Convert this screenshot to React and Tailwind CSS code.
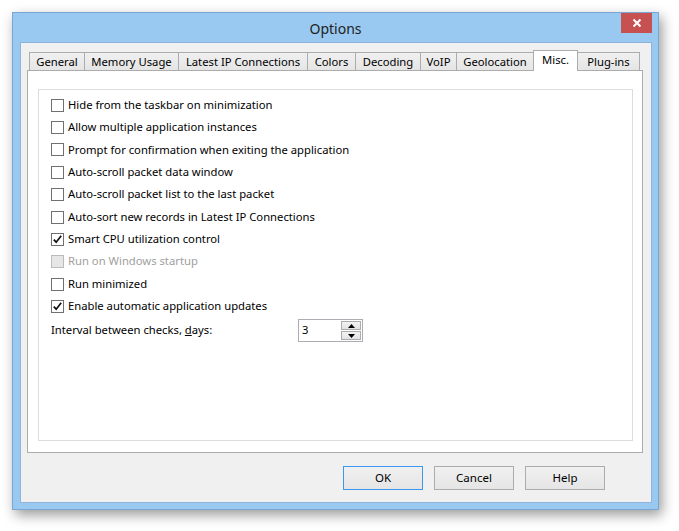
import React from 'react';

const tabs = [
  { label: 'General', w: 'w-[56px]' },
  { label: 'Memory Usage', w: 'w-[95px]' },
  { label: 'Latest IP Connections', w: 'w-[130px]' },
  { label: 'Colors', w: 'w-[49px]' },
  { label: 'Decoding', w: 'w-[66px]' },
  { label: 'VoIP', w: 'w-[37px]' },
  { label: 'Geolocation', w: 'w-[78px]' },
  { label: 'Misc.', w: 'w-[45px]', active: true },
  { label: 'Plug-ins', w: 'w-[63px]' },
];

const options = [
  { label: 'Hide from the taskbar on minimization' },
  { label: 'Allow multiple application instances' },
  { label: 'Prompt for confirmation when exiting the application' },
  { label: 'Auto-scroll packet data window' },
  { label: 'Auto-scroll packet list to the last packet' },
  { label: 'Auto-sort new records in Latest IP Connections' },
  { label: 'Smart CPU utilization control', checked: true },
  { label: 'Run on Windows startup', disabled: true },
  { label: 'Run minimized' },
  { label: 'Enable automatic application updates', checked: true },
];

const CheckBox = ({ checked, disabled }) => (
  <span
    className={
      'w-[13px] h-[13px] shrink-0 border flex items-center justify-center ' +
      (disabled ? 'border-[#bcbcbc] bg-[#e6e6e6]' : 'border-[#707070] bg-white')
    }
  >
    {checked && (
      <svg width="11" height="11" viewBox="0 0 11 11">
        <path d="M1.8 5.6 L4.2 8.2 L9.2 1.8" fill="none" stroke="#111" strokeWidth="1.7" />
      </svg>
    )}
  </span>
);

const Button = ({ children, primary }) => (
  <button
    className={
      'w-[80px] h-[24px] text-[11.5px] text-black bg-gradient-to-b from-[#f0f0f0] to-[#e5e5e5] border ' +
      (primary ? 'border-[#3c97ee]' : 'border-[#acacac]')
    }
  >
    {children}
  </button>
);

export default function App() {
  return (
    <div className="w-[679px] h-[531px] bg-white pt-[12px] pl-[12px] font-['Noto_Sans',sans-serif] text-black">
      {/* window */}
      <div className="w-[647px] h-[498px] bg-[#99c9f0] border border-[#7aa6d4] flex flex-col shadow-[3px_5px_12px_rgba(0,0,0,0.4)]">
        {/* title bar */}
        <div className="h-[29px] flex items-start relative">
          <div className="flex-1 text-center text-[14px] leading-[31px] text-[#222]">Options</div>
          <button className="absolute right-[6px] top-0 w-[31px] h-[20px] bg-[#c75050] flex items-center justify-center">
            <svg width="10" height="10" viewBox="0 0 10 10">
              <path d="M1.5 1.5 L8.5 8.5 M8.5 1.5 L1.5 8.5" stroke="#fff" strokeWidth="2" />
            </svg>
          </button>
        </div>

        {/* client area */}
        <div className="ml-[7px] mr-[6px] mb-[6px] flex-1 bg-[#f0f0f0] border border-[#8fb3d9] flex flex-col">
          {/* tab strip */}
          <div className="mt-[7px] ml-[8px] h-[20px] flex items-end">
            {tabs.map((t, i) => (
              <div
                key={t.label}
                className={
                  t.w +
                  ' border border-b-0 border-[#acacac] text-[11.25px] text-center whitespace-nowrap ' +
                  (i > 0 ? '-ml-px ' : '') +
                  (t.active
                    ? 'h-[21px] -mb-px bg-white relative z-10 leading-[17px]'
                    : 'h-[18px] bg-gradient-to-b from-[#f0f0f0] to-[#e5e5e5] leading-[17px]')
                }
              >
                {t.label}
              </div>
            ))}
          </div>

          {/* tab panel */}
          <div className="ml-[6px] w-[616px] h-[383px] bg-white border border-[#acacac] pl-[10px] pt-[18px]">
            <div className="w-[595px] h-[352px] border border-[#dcdcdc] pl-[12px] pt-[4px] flex flex-col">
              {options.map((o) => (
                <label key={o.label} className="h-[22.4px] flex items-center gap-[4px] text-[11.25px]">
                  <CheckBox checked={o.checked} disabled={o.disabled} />
                  <span className={o.disabled ? 'text-[#a0a0a0]' : 'text-black'}>{o.label}</span>
                </label>
              ))}
              <div className="h-[24px] mt-[1px] flex items-center text-[11.25px]">
                <span className="w-[247px]">
                  Interval between checks, <span className="underline">d</span>ays:
                </span>
                <div className="w-[65px] h-[23px] border border-[#abadb3] bg-white flex items-center">
                  <span className="flex-1 pl-[3px]">3</span>
                  <div className="w-[20px] h-[19px] mr-[1px] flex flex-col gap-[1px]">
                    <div className="flex-1 border border-[#acacac] bg-gradient-to-b from-[#f2f2f2] to-[#e3e3e3] flex items-center justify-center">
                      <svg width="7" height="4" viewBox="0 0 7 4">
                        <path d="M0 4 L3.5 0 L7 4 Z" fill="#000" />
                      </svg>
                    </div>
                    <div className="flex-1 border border-[#acacac] bg-gradient-to-b from-[#f2f2f2] to-[#e3e3e3] flex items-center justify-center">
                      <svg width="7" height="4" viewBox="0 0 7 4">
                        <path d="M0 0 L7 0 L3.5 4 Z" fill="#000" />
                      </svg>
                    </div>
                  </div>
                </div>
              </div>
            </div>
          </div>

          {/* buttons */}
          <div className="mt-[13px] mr-[46px] flex justify-end gap-[11px]">
            <Button primary>OK</Button>
            <Button>Cancel</Button>
            <Button>Help</Button>
          </div>
        </div>
      </div>
    </div>
  );
}
